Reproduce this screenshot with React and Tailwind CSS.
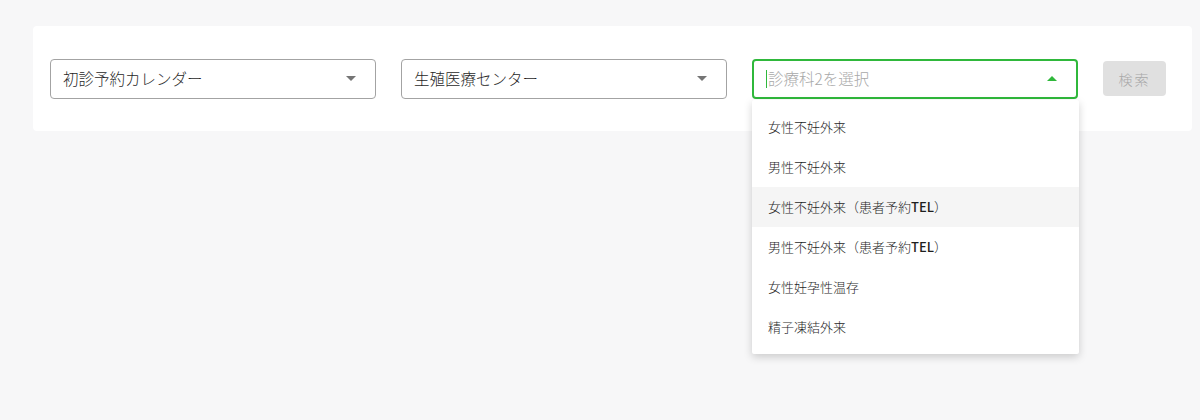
import React from 'react';

const options = [
  { label: '女性不妊外来' },
  { label: '男性不妊外来' },
  { label: '女性不妊外来（患者予約', tel: true, active: true },
  { label: '男性不妊外来（患者予約', tel: true },
  { label: '女性妊孕性温存' },
  { label: '精子凍結外来' },
];

function Caret({ up, color }) {
  return (
    <svg width="10" height="5" viewBox="0 0 10 5" className="shrink-0">
      {up ? <path d="M0 5 L5 0 L10 5 Z" fill={color} /> : <path d="M0 0 L10 0 L5 5 Z" fill={color} />}
    </svg>
  );
}

function Select({ value }) {
  return (
    <div className="w-[326px] h-10 flex items-center justify-between pl-3 pr-[19px] border border-[#a3a3a3] rounded-[4px] bg-white">
      <span className="text-[15.5px] text-[#1f1f1f]">{value}</span>
      <Caret color="#757575" />
    </div>
  );
}

export default function App() {
  return (
    <div className="min-h-[420px] w-full bg-[#f7f7f8] pt-[26px] font-light font-['Noto_Sans_CJK_JP','Noto_Sans',sans-serif]">
      <div className="ml-[33px] w-[1159px] h-[105px] bg-white rounded-[4px] flex items-center pl-[17px] gap-[25px]">
        <Select value="初診予約カレンダー" />
        <Select value="生殖医療センター" />

        {/* open select */}
        <div className="relative w-[326px]">
          <div className="h-10 flex items-center justify-between pl-3 pr-[19px] border-2 border-[#2fb83b] rounded-[4px] bg-white">
            <span className="flex items-center text-[15.5px] text-[#a8a8a8]">
              <span className="w-px h-[18px] bg-[#2fb83b] mr-px" />
              診療科2を選択
            </span>
            <Caret up color="#2fb83b" />
          </div>
          <div className="absolute left-0 top-[41px] w-[327px] bg-white rounded-[2px] py-[7px] shadow-[0_3px_8px_rgba(0,0,0,0.18)] z-10">
            {options.map((o, i) => (
              <div
                key={i}
                className={`h-10 flex items-center pl-4 text-[13px] text-[#1f1f1f] ${o.active ? 'bg-[#f5f5f5]' : ''}`}
              >
                {o.label}
                {o.tel && (
                  <>
                    <span className="font-medium">TEL</span>）
                  </>
                )}
              </div>
            ))}
          </div>
        </div>

        <button className="w-[63px] h-[35px] rounded-[4px] bg-[#e0e0e0] text-sm text-[#a8a8a8] tracking-[2px]">
          検索
        </button>
      </div>
    </div>
  );
}
